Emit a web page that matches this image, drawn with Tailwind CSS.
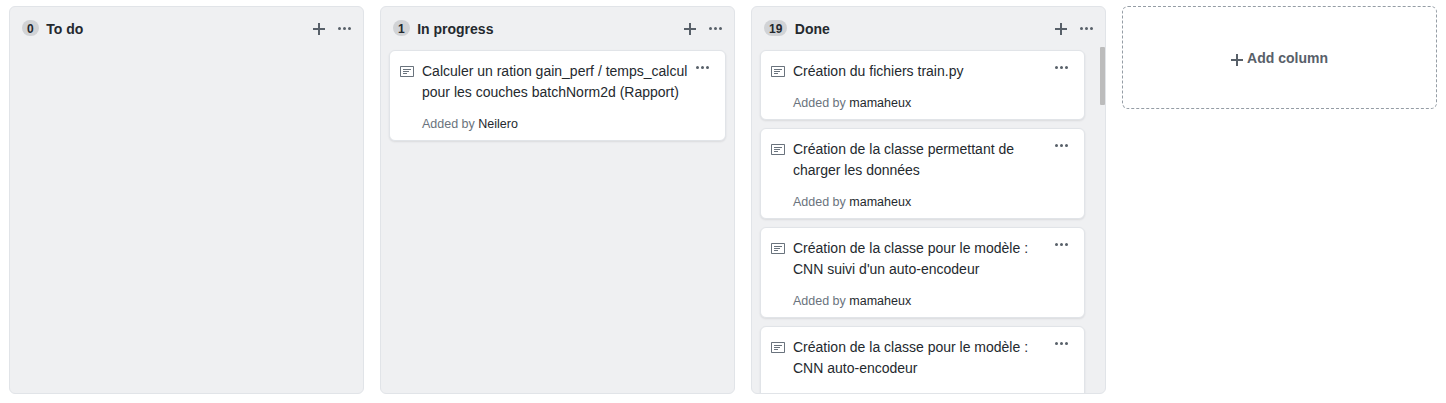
<!DOCTYPE html>
<html lang="fr">
<head>
<meta charset="utf-8">
<title>Project board</title>
<script src="https://cdn.jsdelivr.net/npm/@tailwindcss/browser@4"></script>
</head>
<body class="h-[403px] overflow-hidden bg-white font-['Liberation_Sans',Arial,sans-serif] text-sm leading-[21px] text-[#24292e]">
<svg class="hidden">
  <symbol id="plus" viewBox="0 0 12 16"><path d="M12 9H7v5H5V9H0V7h5V2h2v5h5v2z"/></symbol>
  <symbol id="dots" viewBox="0 0 13 16"><path d="M1.5 9a1.5 1.5 0 1 0 0-3 1.5 1.5 0 0 0 0 3zm5 0a1.5 1.5 0 1 0 0-3 1.5 1.5 0 0 0 0 3zM13 7.5a1.5 1.5 0 1 1-3 0 1.5 1.5 0 0 1 3 0z"/></symbol>
  <symbol id="note" viewBox="0 0 14 16"><path d="M3 10h4V9H3v1zm0-2h6V7H3v1zm0-2h8V5H3v1zm10 6H1V3h12v9zM1 2c-.55 0-1 .45-1 1v9c0 .55.45 1 1 1h12c.55 0 1-.45 1-1V3c0-.55-.45-1-1-1H1z"/></symbol>
</svg>
<main class="flex gap-4 pt-1.5 pl-[9px]">
  <section class="h-[388px] w-[355px] shrink-0 overflow-hidden rounded-md border border-[#e1e4e8] bg-[#eff0f2]">
    <header class="flex h-10 items-start pt-3 pr-3 pl-3">
      <span class="mt-px h-4 rounded-full bg-[#d1d3d6] px-[5px] text-xs leading-[18px] font-bold">0</span>
      <h3 class="ml-[7.5px] font-bold">To do</h3>
      <svg class="mt-[2px] ml-auto h-4 w-3 fill-[#586069]"><use href="#plus"/></svg>
      <svg class="mt-[2px] ml-[13px] h-4 w-[13px] fill-[#586069]"><use href="#dots"/></svg>
    </header>
  </section>

  <section class="h-[388px] w-[355px] shrink-0 overflow-hidden rounded-md border border-[#e1e4e8] bg-[#eff0f2]">
    <header class="flex h-10 items-start pt-3 pr-3 pl-3">
      <span class="mt-px h-4 rounded-full bg-[#d1d3d6] px-[5px] text-xs leading-[18px] font-bold">1</span>
      <h3 class="ml-[7.5px] font-bold">In progress</h3>
      <svg class="mt-[2px] ml-auto h-4 w-3 fill-[#586069]"><use href="#plus"/></svg>
      <svg class="mt-[2px] ml-[13px] h-4 w-[13px] fill-[#586069]"><use href="#dots"/></svg>
    </header>
    <div class="px-2 pt-[3px]">
      <article class="flex h-[91px] rounded-md border border-[#e1e4e8] bg-white pt-[9px] pr-4 pl-[10px] shadow-[0_1px_2px_#1b1f231a]">
        <svg class="mt-1 h-4 w-3.5 shrink-0 fill-[#6a737d]"><use href="#note"/></svg>
        <div class="mt-px ml-2 whitespace-nowrap">
          <p>Calculer un ration gain_perf / temps_calcul<br>pour les couches batchNorm2d (Rapport)</p>
          <p class="mt-[11px] text-[12.5px] leading-5 text-[#6a737d]">Added by <span class="text-[#24292e]">Neilero</span></p>
        </div>
        <svg class="ml-auto h-4 w-[13px] shrink-0 fill-[#586069]"><use href="#dots"/></svg>
      </article>
    </div>
  </section>

  <section class="relative h-[388px] w-[355px] shrink-0 overflow-hidden rounded-md border border-[#e1e4e8] bg-[#eff0f2]">
    <header class="flex h-10 items-start pt-3 pr-3 pl-3">
      <span class="mt-px h-4 rounded-full bg-[#d1d3d6] px-[5px] text-xs leading-[18px] font-bold">19</span>
      <h3 class="ml-[7.5px] font-bold">Done</h3>
      <svg class="mt-[2px] ml-auto h-4 w-3 fill-[#586069]"><use href="#plus"/></svg>
      <svg class="mt-[2px] ml-[13px] h-4 w-[13px] fill-[#586069]"><use href="#dots"/></svg>
    </header>
    <div class="flex flex-col gap-2 pt-[3px] pr-5 pl-2">
      <article class="flex h-[70px] rounded-md border border-[#e1e4e8] bg-white pt-[9px] pr-4 pl-[10px] shadow-[0_1px_2px_#1b1f231a]">
        <svg class="mt-1 h-4 w-3.5 shrink-0 fill-[#6a737d]"><use href="#note"/></svg>
        <div class="mt-px ml-2 whitespace-nowrap">
          <p>Création du fichiers train.py</p>
          <p class="mt-[11px] text-[12.5px] leading-5 text-[#6a737d]">Added by <span class="text-[#24292e]">mamaheux</span></p>
        </div>
        <svg class="ml-auto h-4 w-[13px] shrink-0 fill-[#586069]"><use href="#dots"/></svg>
      </article>
      <article class="flex h-[91px] rounded-md border border-[#e1e4e8] bg-white pt-[9px] pr-4 pl-[10px] shadow-[0_1px_2px_#1b1f231a]">
        <svg class="mt-1 h-4 w-3.5 shrink-0 fill-[#6a737d]"><use href="#note"/></svg>
        <div class="mt-px ml-2 whitespace-nowrap">
          <p>Création de la classe permettant de<br>charger les données</p>
          <p class="mt-[11px] text-[12.5px] leading-5 text-[#6a737d]">Added by <span class="text-[#24292e]">mamaheux</span></p>
        </div>
        <svg class="ml-auto h-4 w-[13px] shrink-0 fill-[#586069]"><use href="#dots"/></svg>
      </article>
      <article class="flex h-[91px] rounded-md border border-[#e1e4e8] bg-white pt-[9px] pr-4 pl-[10px] shadow-[0_1px_2px_#1b1f231a]">
        <svg class="mt-1 h-4 w-3.5 shrink-0 fill-[#6a737d]"><use href="#note"/></svg>
        <div class="mt-px ml-2 whitespace-nowrap">
          <p>Création de la classe pour le modèle :<br>CNN suivi d'un auto-encodeur</p>
          <p class="mt-[11px] text-[12.5px] leading-5 text-[#6a737d]">Added by <span class="text-[#24292e]">mamaheux</span></p>
        </div>
        <svg class="ml-auto h-4 w-[13px] shrink-0 fill-[#586069]"><use href="#dots"/></svg>
      </article>
      <article class="flex h-[91px] rounded-md border border-[#e1e4e8] bg-white pt-[9px] pr-4 pl-[10px] shadow-[0_1px_2px_#1b1f231a]">
        <svg class="mt-1 h-4 w-3.5 shrink-0 fill-[#6a737d]"><use href="#note"/></svg>
        <div class="mt-px ml-2 whitespace-nowrap">
          <p>Création de la classe pour le modèle :<br>CNN auto-encodeur</p>
        </div>
        <svg class="ml-auto h-4 w-[13px] shrink-0 fill-[#586069]"><use href="#dots"/></svg>
      </article>
    </div>
    <div class="absolute top-10 right-0 h-[58px] w-[5px] rounded-[1px] bg-[#bcbcbc]"></div>
  </section>

  <button class="flex h-[103px] w-[315px] shrink-0 items-start justify-center gap-1 rounded-md border border-dashed border-[#959da5] pt-[41px] font-bold text-[#586069]">
    <svg class="mt-1 h-4 w-3 fill-[#586069]"><use href="#plus"/></svg>
    <span>Add column</span>
  </button>
</main>
</body>
</html>
